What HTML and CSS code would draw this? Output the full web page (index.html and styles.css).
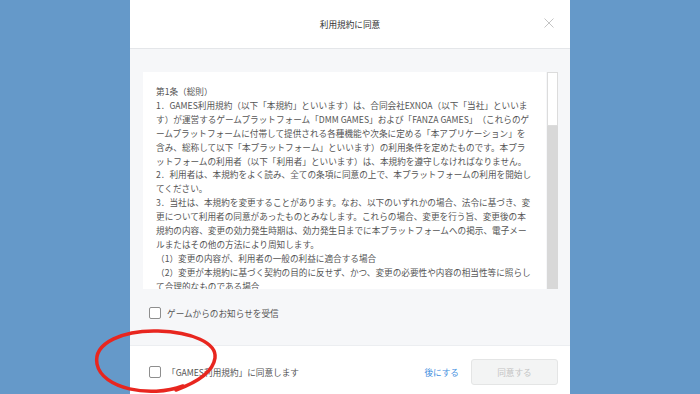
FILE: index.html
```html
<!DOCTYPE html>
<html lang="ja">
<head>
  <meta charset="UTF-8">
  <meta name="viewport" content="width=device-width, initial-scale=1.0">
  <title>利用規約に同意</title>
  <link rel="stylesheet" href="styles.css">
</head>
<body>
  <!-- 規約同意モーダル -->
  <div class="modal">
    <div class="modal-header">
      <span></span>
      <h1 class="modal-title">利用規約に同意</h1>
      <button class="close-btn" aria-label="閉じる">
        <svg width="10" height="10" viewBox="0 0 10 10"><path d="M0.5 0.5L9.5 9.5M9.5 0.5L0.5 9.5" stroke="#c4c4c4" stroke-width="1" fill="none"/></svg>
      </button>
    </div>

    <div class="modal-body">
      <div class="terms">
        <div class="terms-text">
          <p>第1条（総則）</p>
          <p>1．GAMES利用規約（以下「本規約」といいます）は、合同会社EXNOA（以下「当社」といいます）が運営するゲームプラットフォーム「DMM GAMES」および「FANZA GAMES」（これらのゲームプラットフォームに付帯して提供される各種機能や次条に定める「本アプリケーション」を含み、総称して以下「本プラットフォーム」といいます）の利用条件を定めたものです。本プラットフォームの利用者（以下「利用者」といいます）は、本規約を遵守しなければなりません。</p>
          <p>2．利用者は、本規約をよく読み、全ての条項に同意の上で、本プラットフォームの利用を開始してください。</p>
          <p>3．当社は、本規約を変更することがあります。なお、以下のいずれかの場合、法令に基づき、変更について利用者の同意があったものとみなします。これらの場合、変更を行う旨、変更後の本規約の内容、変更の効力発生時期は、効力発生日までに本プラットフォームへの掲示、電子メールまたはその他の方法により周知します。</p>
          <p>（1）変更の内容が、利用者の一般の利益に適合する場合</p>
          <p>（2）変更が本規約に基づく契約の目的に反せず、かつ、変更の必要性や内容の相当性等に照らして合理的なものである場合</p>
          <p>4．前項に定める場合のほか、当社は、利用者の同意を得て本規約を変更することがあります。</p>
          <p>第2条（定義）</p>
        </div>
        <div class="scrollbar"><div class="scrollbar-thumb"></div></div>
      </div>
      <label class="check-row">
        <input type="checkbox" class="checkbox">
        <span>ゲームからのお知らせを受信</span>
      </label>
    </div>

    <div class="modal-footer">
      <label class="check-row agree-check">
        <input type="checkbox" class="checkbox">
        <span>「GAMES利用規約」に同意します</span>
      </label>
      <a href="#" class="later-link">後にする</a>
      <button class="agree-btn" disabled>同意する</button>
    </div>
  </div>

  <!-- 赤丸の注釈 -->
  <svg class="annotation" viewBox="0 0 700 394" width="700" height="394">
    <path d="M183 386 C150 398, 102 389, 97 364 C93 342, 125 330, 158 331 C192 332, 217 343, 215 358 C213 372, 198 382, 176 390" stroke="#e8261f" stroke-width="3.5" fill="none" stroke-linecap="round"/>
  </svg>
</body>
</html>
```

FILE: styles.css
```css
body {
  margin: 0;
  padding: 0;
  background-color: #6599c9;
  font-family: "Noto Sans CJK JP", "Noto Sans", sans-serif;
  height: 100vh;
  overflow: hidden;
  display: flex;
  justify-content: center;
  align-items: flex-start;
}
/* モーダル本体 */
.modal {
  width: 440px;
  background: #fff;
  display: flex;
  flex-direction: column;
  flex-shrink: 0;
}
.modal > div {
  flex-shrink: 0;
}
.modal-header {
  height: 48px;
  display: grid;
  grid-template-columns: 1fr auto 1fr;
  align-items: center;
  padding: 0 16px;
  border-bottom: 1px solid #e4e6e9;
}
.modal-title {
  margin: 0;
  font-size: 8.65px;
  font-weight: normal;
  color: #333;
}
.close-btn {
  justify-self: end;
  background: none;
  border: none;
  padding: 0;
  width: 10px;
  height: 10px;
  display: flex;
  margin-top: -3px;
}
/* 規約本文 */
.modal-body {
  background: #f6f7f9;
  padding: 23px 12px 25px 13px;
  border-bottom: 1px solid #eceef1;
}
.terms {
  display: flex;
  gap: 1px;
  height: 217px;
}
.terms-text {
  flex: 1;
  background: #fff;
  padding: 13px 13px 0 13px;
  overflow: hidden;
  font-size: 8.65px;
  line-height: 13.9px;
  color: #555;
  line-break: normal;
  text-spacing-trim: space-all;
}
.terms-text p {
  margin: 0;
}
.scrollbar {
  width: 11px;
  background: #d8d8d8;
}
.scrollbar-thumb {
  height: 54px;
  background: #fff;
  border: 1px solid #dcdcdc;
  box-sizing: border-box;
}
.check-row {
  display: flex;
  align-items: center;
  gap: 6px;
  font-size: 8.65px;
  line-height: 14px;
  color: #555;
  height: 14px;
  margin-top: 17px;
  padding-left: 6px;
}
.checkbox {
  appearance: none;
  margin: 0;
  width: 12px;
  height: 12px;
  border: 1px solid #8e8e8e;
  border-radius: 2px;
  background: #fff;
  box-sizing: border-box;
  flex-shrink: 0;
}
/* フッター */
.modal-footer {
  height: 52px;
  display: flex;
  align-items: center;
  padding: 0 12px 0 19px;
}
.agree-check {
  flex: 1;
  margin-top: 0;
  padding-left: 0;
}
.later-link {
  color: #3f8fe0;
  text-decoration: none;
  font-size: 8.65px;
  margin-right: 12px;
}
.agree-btn {
  width: 87px;
  height: 26px;
  background: #f3f4f4;
  border: 1px solid #e4e5e5;
  border-radius: 3px;
  color: #c4c4c4;
  font-family: inherit;
  font-size: 8.65px;
  padding: 0;
}
/* 注釈 */
.annotation {
  position: absolute;
  left: 0;
  top: 0;
  pointer-events: none;
}
```
